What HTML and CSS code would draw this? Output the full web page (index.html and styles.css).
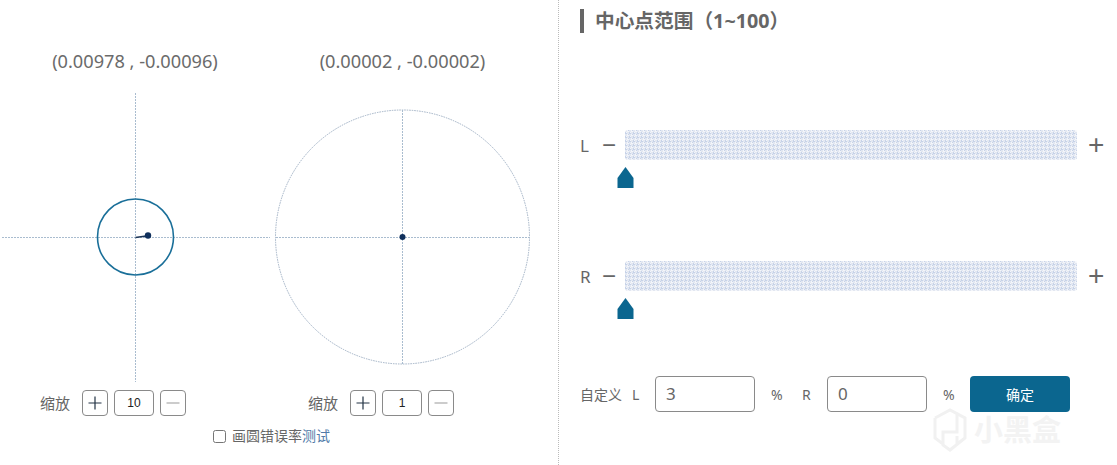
FILE: index.html
```html
<!DOCTYPE html>
<html lang="zh">
<head>
<meta charset="utf-8">
<title>中心点范围</title>
<link rel="stylesheet" href="styles.css">
</head>
<body>
<main class="page">
  <section class="left">
    <div class="gauges">
      <div class="gauge gauge-a">
        <div class="coord">(0.00978 , -0.00096)</div>
        <svg class="plot" width="270" height="290" viewBox="0 93 270 290">
          <line class="axis" x1="2" y1="237.5" x2="270" y2="237.5"/>
          <line class="axis" x1="135.5" y1="93" x2="135.5" y2="382"/>
          <circle class="ring" cx="135.5" cy="237" r="38"/>
          <line class="stick" x1="135.5" y1="237.5" x2="148" y2="235.8"/>
          <circle class="dot" cx="148" cy="235.5" r="3.2"/>
        </svg>
        <div class="zoom">
          <span class="zoom-label">缩放</span>
          <button class="zbtn"><svg width="14" height="14" viewBox="0 0 14 14"><path class="zplus" d="M7 .5v13M.5 7h13"/></svg></button>
          <span class="zval">10</span>
          <button class="zbtn"><svg width="14" height="14" viewBox="0 0 14 14"><path class="zminus" d="M.5 7h13"/></svg></button>
        </div>
      </div>
      <div class="gauge gauge-b">
        <div class="coord">(0.00002 , -0.00002)</div>
        <svg class="plot" width="265" height="290" viewBox="270 93 265 290">
          <circle class="dashed" cx="402.5" cy="237" r="127"/>
          <line class="axis" x1="276" y1="237.5" x2="529" y2="237.5"/>
          <line class="axis" x1="402.5" y1="110" x2="402.5" y2="364"/>
          <circle class="dot" cx="402.5" cy="237" r="3"/>
        </svg>
        <div class="zoom">
          <span class="zoom-label">缩放</span>
          <button class="zbtn"><svg width="14" height="14" viewBox="0 0 14 14"><path class="zplus" d="M7 .5v13M.5 7h13"/></svg></button>
          <span class="zval">1</span>
          <button class="zbtn"><svg width="14" height="14" viewBox="0 0 14 14"><path class="zminus" d="M.5 7h13"/></svg></button>
        </div>
      </div>
    </div>
    <label class="test"><span class="check"></span><span>画圆错误率<span class="test-link">测试</span></span></label>
  </section>

  <section class="right">
    <h2 class="heading">中心点范围（1~100）</h2>
    <div class="slider slider-l">
      <div class="track-row">
        <span class="side">L</span><span class="step">−</span>
        <div class="track"></div>
        <span class="step step-plus">+</span>
      </div>
      <svg class="thumb" width="17" height="21" viewBox="0 0 17 21"><path d="M8.5 0 L16.5 11 V21 H.5 V11 Z"/></svg>
    </div>
    <div class="slider slider-r">
      <div class="track-row">
        <span class="side">R</span><span class="step">−</span>
        <div class="track"></div>
        <span class="step step-plus">+</span>
      </div>
      <svg class="thumb" width="17" height="21" viewBox="0 0 17 21"><path d="M8.5 0 L16.5 11 V21 H.5 V11 Z"/></svg>
    </div>
    <div class="custom">
      <span class="c-title">自定义</span>
      <span class="c-l">L</span>
      <span class="field">3</span>
      <span class="c-pct">%</span>
      <span class="c-r">R</span>
      <span class="field">0</span>
      <span class="c-pct c-pct-2">%</span>
      <button class="ok">确定</button>
    </div>
  </section>

  <div class="watermark">
    <svg width="36" height="44" viewBox="0 0 36 44"><path d="M3 10 L18 2 L33 10 V30 L18 42 L11 37 V24 H18 M3 10 V30 L11 36 M25 6 V24 H18 M33 30 L25 36 V28" /></svg>
    <span>小黑盒</span>
  </div>
</main>
</body>
</html>
```
FILE: styles.css
```css
* { box-sizing: border-box; }
html, body { margin: 0; padding: 0; background: #fff; }
body {
  width: 1117px;
  height: 465px;
  overflow: hidden;
  font-family: "Noto Sans", "Noto Sans CJK SC", sans-serif;
  color: #666;
}
.page { position: relative; display: flex; height: 465px; }

.left {
  width: 559px;
  height: 465px;
  border-right: 1px dotted #bbb;
}
.gauges { display: flex; padding-top: 49px; }
.gauge { display: flex; flex-direction: column; align-items: center; }
.gauge-a { width: 270px; }
.gauge-b { width: 265px; }
.coord {
  height: 24px;
  font-size: 18.2px;
  line-height: 24px;
  color: #6b6b6b;
  white-space: nowrap;
}
.plot { display: block; margin-top: 20px; }
.axis { stroke: #a9bccf; stroke-width: 1; stroke-dasharray: 2 1; }
.ring { fill: none; stroke: #1a6f99; stroke-width: 1.6; }
.dashed { fill: none; stroke: #9fb0c4; stroke-width: 1; stroke-dasharray: 1.5 1; }
.stick { stroke: #1d3557; stroke-width: 1.4; }
.dot { fill: #10305c; }

.zoom { display: flex; align-items: center; gap: 6px; margin-top: 6px; height: 27px; align-self: flex-start; }
.gauge-a .zoom { margin-left: 40px; }
.gauge-b .zoom { margin-left: 38px; }
.zoom-label { font-size: 15px; color: #666; width: 32px; margin-right: 4px; white-space: nowrap; }
.zbtn {
  display: flex;
  align-items: center;
  justify-content: center;
  width: 26px;
  height: 26px;
  padding: 0;
  background: #fff;
  border: 1px solid #8a8a8a;
  border-radius: 4px;
}
.zbtn svg { display: block; }
.zplus { fill: none; stroke: #234; stroke-width: 1.2; }
.zminus { fill: none; stroke: #aaa; stroke-width: 1.2; }
.zval {
  display: flex;
  align-items: center;
  justify-content: center;
  width: 40px;
  height: 26px;
  border: 1px solid #8a8a8a;
  border-radius: 4px;
  font-family: "Liberation Sans", sans-serif;
  font-size: 12px;
  color: #222;
}

.test {
  display: flex;
  align-items: center;
  gap: 6px;
  margin-top: 10px;
  margin-left: 213px;
  font-size: 14px;
  line-height: 20px;
  color: #666;
}
.check {
  width: 13px;
  height: 13px;
  border: 1px solid #767676;
  border-radius: 2.5px;
  background: #fff;
}
.test-link { color: #4f7aa8; }

.right { flex: 1; padding: 9px 0 0 21px; }
.heading {
  margin: 0;
  height: 24px;
  padding-left: 11px;
  border-left: 4px solid #666;
  font-size: 19.7px;
  line-height: 24px;
  font-weight: 700;
  color: #666;
  white-space: nowrap;
}

.slider { display: flex; flex-direction: column; }
.slider-l { margin-top: 97px; }
.slider-r { margin-top: 73px; }
.track-row { display: flex; align-items: center; height: 30px; }
.side { width: 22px; font-size: 17px; color: #666; }
.step { width: 23px; font-size: 24px; line-height: 30px; color: #666; font-family: "Liberation Sans", sans-serif; }
.track {
  width: 452px;
  height: 30px;
  border-radius: 3px;
  background-color: #e2e7f1;
  background-image:
    linear-gradient(45deg, #c6d2e8 25%, transparent 25%, transparent 75%, #c6d2e8 75%),
    linear-gradient(45deg, #f3f5fa 25%, transparent 25%, transparent 75%, #f3f5fa 75%);
  background-size: 4px 4px;
  background-position: 0 0, 2px 2px;
}
.step-plus { width: auto; margin-left: 11px; font-size: 28px; }
.thumb { display: block; margin: 7px 0 0 37px; }
.thumb path { fill: #0b668f; }

.custom { display: flex; align-items: center; height: 36px; margin-top: 57px; font-size: 14px; color: #666; }
.c-title { width: 52px; white-space: nowrap; }
.c-l { width: 23px; }
.field {
  display: flex;
  align-items: center;
  width: 100px;
  height: 36px;
  padding: 0 0 2px 10px;
  border: 1px solid #8a8a8a;
  border-radius: 4px;
  font-size: 17px;
  color: #666;
}
.c-pct { width: 31px; margin-left: 16px; }
.c-r { width: 25px; }
.c-pct-2 { width: 27px; }
.ok {
  width: 100px;
  height: 36px;
  padding: 0;
  border: 0;
  border-radius: 4px;
  background: #0b668f;
  color: #fff;
  font-family: inherit;
  font-size: 14px;
}

.watermark {
  position: absolute;
  left: 932px;
  top: 408px;
  display: flex;
  align-items: center;
  gap: 6px;
  color: #f3f3f3;
  font-size: 29px;
  line-height: 44px;
  font-weight: 700;
  pointer-events: none;
}
.watermark svg { display: block; }
.watermark path { fill: none; stroke: #f1f1f1; stroke-width: 3; }
```
